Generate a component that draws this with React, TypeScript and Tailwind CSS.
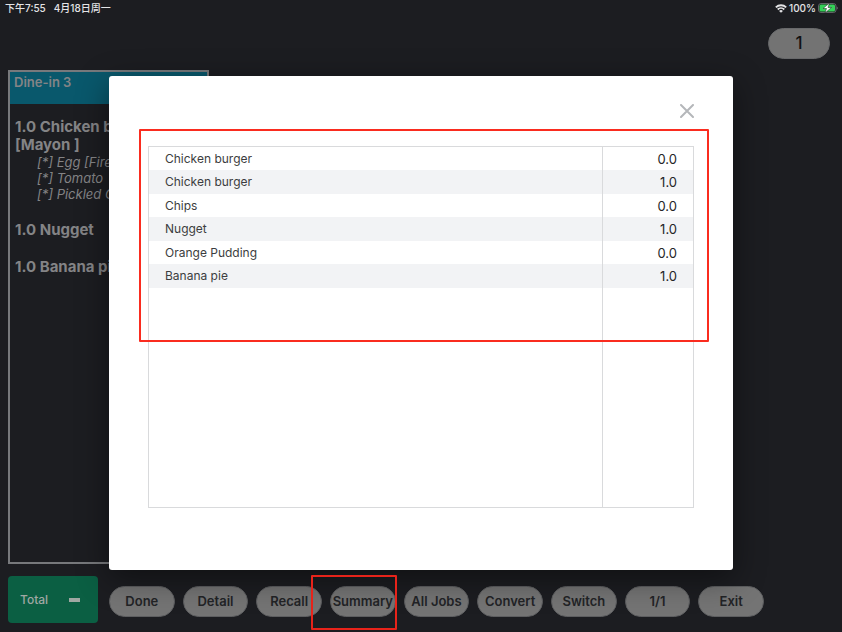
const summary = [
  { name: "Chicken burger", qty: "0.0" },
  { name: "Chicken burger", qty: "1.0" },
  { name: "Chips", qty: "0.0" },
  { name: "Nugget", qty: "1.0" },
  { name: "Orange Pudding", qty: "0.0" },
  { name: "Banana pie", qty: "1.0" },
];

const actions = ["Done", "Detail", "Recall", "Summary", "All Jobs", "Convert", "Switch", "1/1", "Exit"];

function StatusBar() {
  return (
    <header className="flex h-4 items-center justify-between pl-[5px] pr-1 text-[10px] leading-4 font-medium text-[#e4e4e6]">
      <div className="flex gap-2">
        <span>下午7:55</span>
        <span>4月18日周一</span>
      </div>
      <div className="flex items-center gap-[2px]">
        <svg width="12" height="9" viewBox="0 0 22 16" fill="none" stroke="currentColor" strokeWidth="3.4">
          <path d="M1.5 6a13.5 13.5 0 0 1 19 0" />
          <path d="M5 9.8a8.6 8.6 0 0 1 12 0" />
          <path d="M11 16l-3.5-3.6a5 5 0 0 1 7 0z" fill="currentColor" stroke="none" />
        </svg>
        <span>100%</span>
        <svg width="20" height="10" viewBox="0 0 40 20">
          <rect x="1" y="1" width="35" height="18" rx="5" fill="none" stroke="#77797c" strokeWidth="1.5" />
          <rect x="3" y="3" width="31" height="14" rx="3" fill="#35d058" />
          <path d="M37.5 7v6q2-1 2-3t-2-3z" fill="#77797c" />
          <path d="M23 0L10 11h7l-3 9 13-11h-7z" fill="#fff" stroke="#1c1d21" strokeWidth="1" />
        </svg>
      </div>
    </header>
  );
}

function OrderCard() {
  return (
    <section className="w-[201px] flex-1 border-2 border-[#77797c] text-[#848486]">
      <h2 className="h-8 bg-[#09586c] pl-1 pt-[2px] text-[13px] leading-4 font-semibold">Dine-in 3</h2>
      <div className="pl-[5px] pt-[14px] text-[15px] leading-[18px] font-bold whitespace-nowrap">
        <p>1.0 Chicken burger</p>
        <p>[Mayon ]</p>
        <ul className="pl-[22px] text-[13px] leading-4 font-normal italic">
          <li>[*] Egg [Fired]</li>
          <li>[*] Tomato</li>
          <li>[*] Pickled Onion</li>
        </ul>
        <p className="pt-[19px]">1.0 Nugget</p>
        <p className="pt-[19px]">1.0 Banana pie</p>
      </div>
    </section>
  );
}

function SummaryDialog() {
  return (
    <div className="absolute inset-0 flex px-[109px] pt-[76px] pb-[62px]">
      <div
        role="dialog"
        aria-label="Summary"
        className="flex flex-1 flex-col rounded-[3px] bg-white pr-[39px] pb-[62px] pl-[39px] shadow-[0_8px_32px_rgba(0,0,0,0.45)]"
      >
        <div className="flex h-[70px] justify-end pt-7">
          <button aria-label="Close" className="h-[14px] w-[14px] text-[#b5b7ba]">
            <svg width="14" height="14" viewBox="0 0 14 14" stroke="currentColor" strokeWidth="2" strokeLinecap="round">
              <path d="M1 1l12 12M13 1L1 13" />
            </svg>
          </button>
        </div>
        <div className="relative flex flex-1 flex-col border border-[#d9dadc]">
          <table className="w-full flex-1 table-fixed border-collapse text-[13px] leading-4 text-[#3c3d40]">
            <colgroup>
              <col />
              <col className="w-[91px]" />
            </colgroup>
            <tbody>
              {summary.map((item, i) => (
                <tr key={i} className="h-[23px] even:h-6 even:bg-[#f2f3f5]">
                  <td className="py-0 pl-4 text-xs">{item.name}</td>
                  <td className="border-l border-[#d9dadc] py-0 pr-4 text-right text-[#242527]">{item.qty}</td>
                </tr>
              ))}
              <tr>
                <td></td>
                <td className="border-l border-[#d9dadc]"></td>
              </tr>
            </tbody>
          </table>
          <div className="pointer-events-none absolute -top-[18px] -right-4 -left-[10px] h-[213px] rounded-[1px] border-2 border-[#fa2c1f]" />
        </div>
      </div>
    </div>
  );
}

export default function App() {
  return (
    <div className="relative flex min-h-screen flex-col bg-[#1c1d21] font-[Inter,'Noto_Sans_CJK_SC',sans-serif]">
      <StatusBar />
      <div className="flex h-[54px] justify-end pt-3 pr-3">
        <button className="h-[31px] w-[62px] rounded-full border border-[#68696b] bg-[#737373] text-[17px] font-medium text-[#111]">1</button>
      </div>
      <main className="flex flex-1 flex-col pl-2">
        <OrderCard />
      </main>
      <footer className="flex h-[68px] items-start gap-[11px] pr-[78px] pl-2 pt-3 text-[13px]">
        <button className="flex h-[47px] w-[90px] items-center justify-between rounded-[4px] bg-[#0b5f43] pr-[18px] pl-3 text-xs font-medium text-[#a0a8a3]">
          <span>Total</span>
          <span className="h-1 w-[11px] bg-[#a0a8a3]" />
        </button>
        <nav className="grid flex-1 grid-cols-9 gap-2 pt-[10px]">
          {actions.map((label) => (
            <div key={label} className="relative">
              <button className="flex h-[31px] w-full items-center justify-center rounded-full border border-[#5d5e60] bg-[#747474] font-semibold whitespace-nowrap text-[#222326]">
                {label}
              </button>
              {label === "Summary" && (
                <div className="pointer-events-none absolute -top-[11px] -right-[1px] -left-[19px] z-10 h-[55px] rounded-[1px] border-2 border-[#e8231a]" />
              )}
            </div>
          ))}
        </nav>
      </footer>
      <SummaryDialog />
    </div>
  );
}
